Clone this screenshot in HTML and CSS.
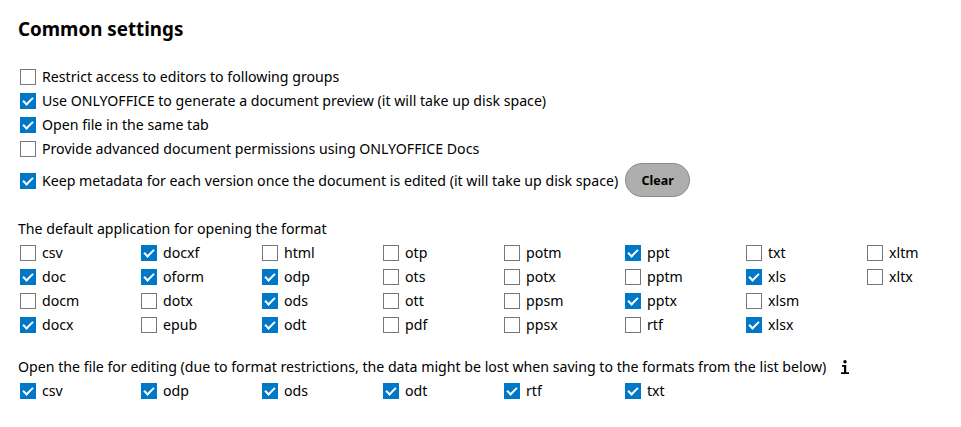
FILE: index.html
```html
<!DOCTYPE html>
<html lang="en">
<head>
    <meta charset="UTF-8">
    <title>Common settings</title>
    <link rel="stylesheet" href="styles.css">
</head>
<body>
    <main class="settings">
        <h2 class="settings-title">Common settings</h2>

        <div class="option-list">
            <label class="check"><input type="checkbox">Restrict access to editors to following groups</label>
            <label class="check"><input type="checkbox" checked>Use ONLYOFFICE to generate a document preview (it will take up disk space)</label>
            <label class="check"><input type="checkbox" checked>Open file in the same tab</label>
            <label class="check"><input type="checkbox">Provide advanced document permissions using ONLYOFFICE Docs</label>
            <div class="option-clear">
                <label class="check"><input type="checkbox" checked>Keep metadata for each version once the document is edited (it will take up disk space)</label>
                <button class="clear-button">Clear</button>
            </div>
        </div>

        <p class="group-label">The default application for opening the format</p>
        <div class="format-grid">
            <label class="check"><input type="checkbox">csv</label>
            <label class="check"><input type="checkbox" checked>doc</label>
            <label class="check"><input type="checkbox">docm</label>
            <label class="check"><input type="checkbox" checked>docx</label>
            <label class="check"><input type="checkbox" checked>docxf</label>
            <label class="check"><input type="checkbox" checked>oform</label>
            <label class="check"><input type="checkbox">dotx</label>
            <label class="check"><input type="checkbox">epub</label>
            <label class="check"><input type="checkbox">html</label>
            <label class="check"><input type="checkbox" checked>odp</label>
            <label class="check"><input type="checkbox" checked>ods</label>
            <label class="check"><input type="checkbox" checked>odt</label>
            <label class="check"><input type="checkbox">otp</label>
            <label class="check"><input type="checkbox">ots</label>
            <label class="check"><input type="checkbox">ott</label>
            <label class="check"><input type="checkbox">pdf</label>
            <label class="check"><input type="checkbox">potm</label>
            <label class="check"><input type="checkbox">potx</label>
            <label class="check"><input type="checkbox">ppsm</label>
            <label class="check"><input type="checkbox">ppsx</label>
            <label class="check"><input type="checkbox" checked>ppt</label>
            <label class="check"><input type="checkbox">pptm</label>
            <label class="check"><input type="checkbox" checked>pptx</label>
            <label class="check"><input type="checkbox">rtf</label>
            <label class="check"><input type="checkbox">txt</label>
            <label class="check"><input type="checkbox" checked>xls</label>
            <label class="check"><input type="checkbox">xlsm</label>
            <label class="check"><input type="checkbox" checked>xlsx</label>
            <label class="check"><input type="checkbox">xltm</label>
            <label class="check"><input type="checkbox">xltx</label>
        </div>

        <p class="group-label group-label-info">
            Open the file for editing (due to format restrictions, the data might be lost when saving to the formats from the list below)
            <svg class="info-icon" width="8" height="14" viewBox="0 0 8 14" aria-hidden="true">
                <circle cx="4" cy="1.800" r="1.700"/>
                <path d="M1 5h4.200v7.300H8V14H0v-1.700h3V6.700H1z"/>
            </svg>
        </p>
        <div class="format-grid format-grid-single">
            <label class="check"><input type="checkbox" checked>csv</label>
            <label class="check"><input type="checkbox" checked>odp</label>
            <label class="check"><input type="checkbox" checked>ods</label>
            <label class="check"><input type="checkbox" checked>odt</label>
            <label class="check"><input type="checkbox" checked>rtf</label>
            <label class="check"><input type="checkbox" checked>txt</label>
        </div>
    </main>
</body>
</html>
```

FILE: styles.css
```css
body {
    margin: 0;
    background-color: #fff;
    color: #000;
    font-family: "Noto Sans", "Open Sans", sans-serif;
    font-size: 14.15px;
}
.settings {
    padding: 17px 18px 0;
}
.settings-title {
    margin: 0 0 23px;
    font-size: 18.8px;
    line-height: 24px;
    font-weight: 700;
}
.option-list {
    display: flex;
    flex-direction: column;
}
.check {
    display: flex;
    align-items: center;
    height: 24px;
    white-space: nowrap;
}
.check input {
    appearance: none;
    position: relative;
    flex: none;
    width: 16px;
    height: 16px;
    margin: 2px 6px 0 2px;
    background-color: #fff;
    border: 1px solid #767676;
}
.check input:checked {
    background-color: #0078c8;
    border-color: #0078c8;
}
.check input:checked::before {
    content: "";
    position: absolute;
    left: 4px;
    top: 1px;
    width: 4px;
    height: 8px;
    border: solid #fff;
    border-width: 0 2px 2px 0;
    transform: rotate(45deg);
}
.option-clear {
    display: flex;
    align-items: center;
    gap: 7px;
    height: 34px;
    margin-top: 3px;
}
.clear-button {
    width: 65px;
    height: 34px;
    padding: 0;
    background-color: #aeaeae;
    border: 1px solid #8a8a8a;
    border-radius: 17px;
    color: #000;
    font-family: inherit;
    font-size: 12.500px;
    font-weight: 700;
}
.group-label {
    margin: 21px 0 0;
    line-height: 22px;
}
.group-label-info {
    display: flex;
    align-items: center;
    gap: 15px;
    margin: 19px 0 0;
    line-height: 23px;
}
.info-icon {
    flex: none;
    fill: #000;
}
.format-grid {
    display: grid;
    grid-auto-flow: column;
    grid-template-rows: repeat(4, 24px);
    grid-auto-columns: 121px;
}
.format-grid-single {
    grid-template-rows: 24px;
}
```
